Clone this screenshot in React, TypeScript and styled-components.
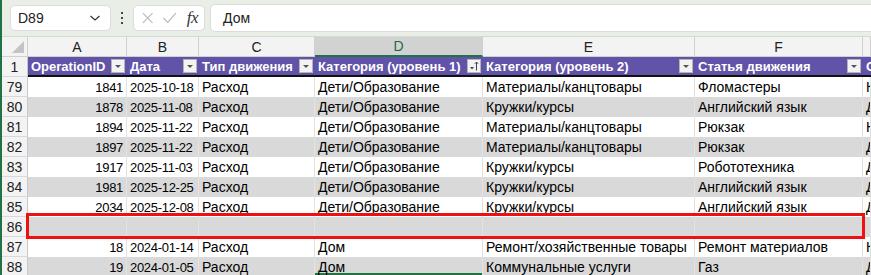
import styled, { createGlobalStyle } from "styled-components"

const GlobalStyle = createGlobalStyle`
  body {
    margin: 0;
    background: #fff;
    font-family: "Liberation Sans", Arial, sans-serif;
  }
`

const COLS = "26px 99px 72px 116px 168px 212px 168px 1fr"

const columns = ["A", "B", "C", "D", "E", "F", ""]
const headers = [
  "OperationID",
  "Дата",
  "Тип движения",
  "Категория (уровень 1)",
  "Категория (уровень 2)",
  "Статья движения",
  "Способ оплаты",
]

const rows = [
  { n: 79, id: "1841", date: "2025-10-18", type: "Расход", c1: "Дети/Образование", c2: "Материалы/канцтовары", item: "Фломастеры", pay: "Карта" },
  { n: 80, id: "1878", date: "2025-11-08", type: "Расход", c1: "Дети/Образование", c2: "Кружки/курсы", item: "Английский язык", pay: "Дебетовая карта" },
  { n: 81, id: "1894", date: "2025-11-22", type: "Расход", c1: "Дети/Образование", c2: "Материалы/канцтовары", item: "Рюкзак", pay: "Наличные" },
  { n: 82, id: "1897", date: "2025-11-22", type: "Расход", c1: "Дети/Образование", c2: "Материалы/канцтовары", item: "Рюкзак", pay: "Дебетовая карта" },
  { n: 83, id: "1917", date: "2025-11-03", type: "Расход", c1: "Дети/Образование", c2: "Кружки/курсы", item: "Робототехника", pay: "Дебетовая карта" },
  { n: 84, id: "1981", date: "2025-12-25", type: "Расход", c1: "Дети/Образование", c2: "Кружки/курсы", item: "Английский язык", pay: "Дебетовая карта" },
  { n: 85, id: "2034", date: "2025-12-08", type: "Расход", c1: "Дети/Образование", c2: "Кружки/курсы", item: "Английский язык", pay: "Дебетовая карта" },
  { n: 86, id: "", date: "", type: "", c1: "", c2: "", item: "", pay: "" },
  { n: 87, id: "18", date: "2024-01-14", type: "Расход", c1: "Дом", c2: "Ремонт/хозяйственные товары", item: "Ремонт материалов", pay: "Карта" },
  { n: 88, id: "19", date: "2024-01-05", type: "Расход", c1: "Дом", c2: "Коммунальные услуги", item: "Газ", pay: "Дебетовая карта" },
]

export default function App() {
  return (
    <Page>
      <GlobalStyle />
      <TopBar>
        <NameBox>
          <span>D89</span>
          <svg width="12" height="8" viewBox="0 0 12 8">
            <path d="M1.5 2 L6 6 L10.5 2" fill="none" stroke="#333" strokeWidth="1.2" />
          </svg>
        </NameBox>
        <Dots>
          <i />
          <i />
          <i />
        </Dots>
        <FxBox>
          <svg width="14" height="14" viewBox="0 0 14 14">
            <path d="M2 2 L12 12 M12 2 L2 12" stroke="#b9b9b9" strokeWidth="1.2" />
          </svg>
          <svg width="16" height="14" viewBox="0 0 16 14">
            <path d="M1.5 7 L6 11.5 L14.5 2" fill="none" stroke="#b9b9b9" strokeWidth="1.2" />
          </svg>
          <Fx>fx</Fx>
        </FxBox>
        <FormulaInput>Дом</FormulaInput>
      </TopBar>
      <Sheet>
        <GridRow>
          <Corner>
            <svg width="12" height="12" viewBox="0 0 12 12">
              <path d="M12 0 L12 12 L0 12 Z" fill="#c4c4c4" />
            </svg>
          </Corner>
          {columns.map((c, i) => (
            <ColHead key={i} $selected={c === "D"}>
              {c}
            </ColHead>
          ))}
        </GridRow>
        <GridRow>
          <RowHead>1</RowHead>
          {headers.map((h, i) => (
            <HeadCell key={h}>
              <HeadText>{h}</HeadText>
              {i < 6 && (
                <FilterBtn>
                  {i === 3 ? (
                    <svg width="12" height="12" viewBox="0 0 12 12">
                      <path d="M2 7 L6 7 L4 9.5 Z" fill="#444" />
                      <path d="M8.5 10.5 L8.5 2 M6.8 3.8 L8.5 2 L10.2 3.8" fill="none" stroke="#444" strokeWidth="1" />
                    </svg>
                  ) : (
                    <svg width="12" height="12" viewBox="0 0 12 12">
                      <path d="M3 5 L9 5 L6 8 Z" fill="#555" />
                    </svg>
                  )}
                </FilterBtn>
              )}
            </HeadCell>
          ))}
        </GridRow>
        {rows.map((r, idx) => {
          const band = idx % 2 === 1
          return (
            <GridRow key={r.n}>
              <RowHead>{r.n}</RowHead>
              <Cell $band={band} $right $num>{r.id}</Cell>
              <Cell $band={band} $num>{r.date}</Cell>
              <Cell $band={band}>{r.type}</Cell>
              <Cell $band={band} $active={r.n === 88}>{r.c1}</Cell>
              <Cell $band={band}>{r.c2}</Cell>
              <Cell $band={band}>{r.item}</Cell>
              <Cell $band={band}>{r.pay}</Cell>
            </GridRow>
          )
        })}
        <Highlight />
      </Sheet>
    </Page>
  )
}

const Page = styled.div`
  width: 871px;
  height: 275px;
  overflow: hidden;
  border-left: 2px solid #217346;
  box-sizing: border-box;
`

const TopBar = styled.div`
  display: flex;
  align-items: center;
  height: 37px;
  box-sizing: border-box;
  padding: 5px 0 5px 8px;
  background: #e9eee6;
  border-bottom: 1px solid #d6d9d3;
`

const NameBox = styled.div`
  display: flex;
  align-items: center;
  justify-content: space-between;
  width: 101px;
  height: 26px;
  box-sizing: border-box;
  padding: 0 9px 0 7px;
  background: #fff;
  border: 1px solid #dcdcdc;
  border-radius: 5px;
  font-size: 14px;
  color: #222;
`

const Dots = styled.div`
  display: flex;
  flex-direction: column;
  gap: 3px;
  width: 22px;
  align-items: center;
  i {
    width: 2px;
    height: 2px;
    background: #444;
  }
`

const FxBox = styled.div`
  display: flex;
  align-items: center;
  gap: 8px;
  width: 72px;
  height: 26px;
  box-sizing: border-box;
  padding: 0 6px 0 7px;
  background: #fff;
  border: 1px solid #dcdcdc;
  border-radius: 5px;
`

const Fx = styled.span`
  font-family: "Liberation Serif", "Times New Roman", serif;
  font-style: italic;
  font-size: 17px;
  color: #333;
  margin-left: 1px;
  letter-spacing: -0.5px;
`

const FormulaInput = styled.div`
  flex: 1;
  height: 26px;
  margin-left: 5px;
  display: flex;
  align-items: center;
  padding-left: 12px;
  background: #fff;
  border: 1px solid #dcdcdc;
  border-right: none;
  border-radius: 5px 0 0 5px;
  font-size: 14px;
  color: #222;
`

const Sheet = styled.div`
  position: relative;
`

const GridRow = styled.div`
  display: grid;
  grid-template-columns: ${COLS};
  height: 20px;
`

const Corner = styled.div`
  display: flex;
  align-items: flex-end;
  justify-content: flex-end;
  padding: 0 3px 3px 0;
  background: #f3f3f3;
  border-right: 1px solid #d0d0d0;
  border-bottom: 1px solid #d0d0d0;
`

const ColHead = styled.div<{ $selected?: boolean }>`
  display: flex;
  align-items: center;
  justify-content: center;
  background: ${(p) => (p.$selected ? "#d2d2d2" : "#f3f3f3")};
  color: ${(p) => (p.$selected ? "#1e6b3e" : "#222")};
  border-right: 1px solid #d0d0d0;
  border-bottom: ${(p) => (p.$selected ? "2px solid #217346" : "1px solid #d0d0d0")};
  font-size: 14px;
  overflow: hidden;
`

const RowHead = styled.div`
  display: flex;
  align-items: center;
  justify-content: center;
  background: #f3f3f3;
  color: #222;
  border-right: 1px solid #c8c8c8;
  border-bottom: 1px solid #d9d9d9;
  font-size: 14px;
`

const HeadCell = styled.div`
  display: flex;
  align-items: center;
  justify-content: space-between;
  min-width: 0;
  padding: 0 2px 0 3px;
  background: #6153a7;
  border-bottom: 2px solid #111;
  overflow: hidden;
`

const HeadText = styled.span`
  color: #fff;
  font-weight: bold;
  font-size: 13px;
  white-space: nowrap;
`

const FilterBtn = styled.div`
  display: flex;
  align-items: center;
  justify-content: center;
  flex: none;
  width: 12px;
  height: 12px;
  background: #f3f3f3;
  border: 1px solid #b5b5b5;
`

const Cell = styled.div<{ $band?: boolean; $right?: boolean; $active?: boolean; $num?: boolean }>`
  display: flex;
  align-items: center;
  justify-content: ${(p) => (p.$right ? "flex-end" : "flex-start")};
  min-width: 0;
  padding: 0 3px;
  background: ${(p) => (p.$band ? "#d9d9d9" : "#fff")};
  border-right: 1px solid ${(p) => (p.$band ? "#e3e3e3" : "#e1e1e1")};
  box-shadow: ${(p) => (p.$active ? "inset 0 -4px 0 #217346" : "none")};
  font-size: ${(p) => (p.$num ? "13px" : "14px")};
  letter-spacing: ${(p) => (p.$num ? "-0.3px" : "normal")};
  color: #000;
  white-space: nowrap;
  overflow: hidden;
`

const Highlight = styled.div`
  position: absolute;
  left: 24px;
  top: 176px;
  width: 839px;
  height: 26px;
  box-sizing: border-box;
  border: 3px solid #ee1111;
`
